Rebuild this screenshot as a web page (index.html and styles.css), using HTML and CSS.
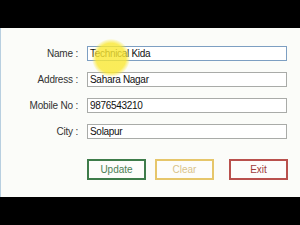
FILE: index.html
```html
<!DOCTYPE html>
<html>
<head>
  <meta charset="UTF-8" />
  <title>Student Form</title>
  <link rel="stylesheet" href="styles.css">
</head>
<body>
  <div class="panel">
    <div class="form">
      <label>Name :</label>
      <div class="field focus">Technical Kida</div>
      <label>Address :</label>
      <div class="field">Sahara Nagar</div>
      <label>Mobile No :</label>
      <div class="field">9876543210</div>
      <label>City :</label>
      <div class="field">Solapur</div>
    </div>

    <div class="actions">
      <button class="btn update">Update</button>
      <button class="btn clear">Clear</button>
      <button class="btn exit">Exit</button>
    </div>

    <div class="cursor-glow"></div>
  </div>
</body>
</html>
```

FILE: styles.css
```css
html, body {
  margin: 0;
  background: #000;
}

body {
  height: 225px;
  font-family: 'Liberation Sans', Arial, sans-serif;
  font-size: 10px;
  color: #333;
}

.panel {
  position: relative;
  margin-top: 28px;
  height: 169px;
  box-sizing: border-box;
  background: #fbfcf9;
  border-left: 1px solid #b8cfe0;
  padding-top: 18px;
}

.form {
  display: grid;
  grid-template-columns: 77px 200px;
  column-gap: 9px;
  row-gap: 11px;
}

.form label {
  text-align: right;
  line-height: 15px;
  letter-spacing: -0.2px;
}

.field {
  height: 15px;
  box-sizing: border-box;
  border: 1px solid #a9aba8;
  background: #fff;
  padding-left: 2px;
  line-height: 13px;
  color: #111;
  letter-spacing: -0.3px;
}

.field.focus {
  border-color: #7d9fc2;
}

.actions {
  display: flex;
  margin-top: 20px;
  margin-left: 86px;
}

.btn {
  width: 59px;
  height: 21px;
  box-sizing: border-box;
  background: #fdfdfb;
  border: 2px solid;
  font-family: inherit;
  font-size: 10px;
  padding: 0;
}

.update {
  border-color: #3e7c4a;
  color: #4c7f55;
}

.clear {
  margin-left: 9px;
  border-color: #e6c66a;
  color: #d9c38a;
}

.exit {
  margin-left: 15px;
  border-color: #b9514d;
  color: #9e3c3a;
}

.cursor-glow {
  position: absolute;
  left: 91px;
  top: 11px;
  width: 38px;
  height: 38px;
  border-radius: 50%;
  background: radial-gradient(circle, rgba(250, 232, 50, 0.8) 55%, rgba(250, 232, 50, 0) 72%);
  pointer-events: none;
}
```
